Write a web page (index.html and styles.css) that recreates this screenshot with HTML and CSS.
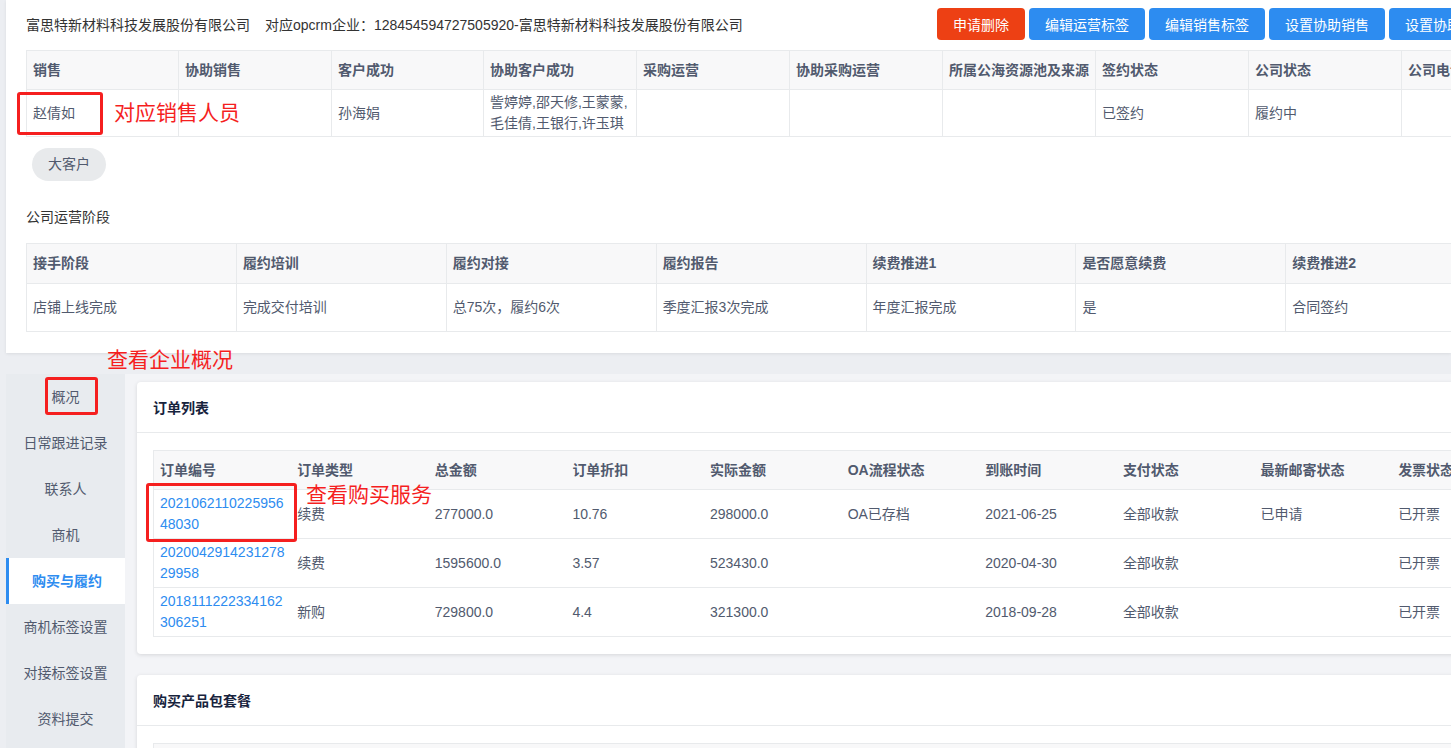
FILE: index.html
```html
<!DOCTYPE html>
<html lang="zh-CN">
<head>
<meta charset="utf-8">
<title>客户详情</title>
<link rel="stylesheet" href="styles.css">
</head>
<body>
<div class="page">
  <section class="top-card">
    <div class="top-head">
      <div class="company">富思特新材料科技发展股份有限公司<span class="ref">对应opcrm企业：128454594727505920-富思特新材料科技发展股份有限公司</span></div>
      <div class="actions">
        <button class="btn btn-red">申请删除</button>
        <button class="btn">编辑运营标签</button>
        <button class="btn">编辑销售标签</button>
        <button class="btn">设置协助销售</button>
        <button class="btn">设置协助客户成功</button>
      </div>
    </div>
    <table class="grid grid-staff">
      <colgroup>
        <col class="c152"><col class="c153"><col class="c152"><col class="c153"><col class="c153"><col class="c153"><col class="c153"><col class="c153"><col class="c153"><col class="c153">
      </colgroup>
      <thead>
        <tr><th>销售</th><th>协助销售</th><th>客户成功</th><th>协助客户成功</th><th>采购运营</th><th>协助采购运营</th><th>所属公海资源池及来源</th><th>签约状态</th><th>公司状态</th><th>公司电话</th></tr>
      </thead>
      <tbody>
        <tr><td>赵倩如</td><td></td><td>孙海娟</td><td>訾婷婷,邵天修,王蒙蒙,毛佳倩,王银行,许玉琪</td><td></td><td></td><td></td><td>已签约</td><td>履约中</td><td></td></tr>
      </tbody>
    </table>
    <div class="tags"><span class="tag">大客户</span></div>
    <div class="section-title">公司运营阶段</div>
    <table class="grid grid-stage">
      <thead>
        <tr><th>接手阶段</th><th>履约培训</th><th>履约对接</th><th>履约报告</th><th>续费推进1</th><th>是否愿意续费</th><th>续费推进2</th><th>续费结果</th></tr>
      </thead>
      <tbody>
        <tr><td>店铺上线完成</td><td>完成交付培训</td><td>总75次，履约6次</td><td>季度汇报3次完成</td><td>年度汇报完成</td><td>是</td><td>合同签约</td><td></td></tr>
      </tbody>
    </table>
  </section>

  <div class="main">
    <nav class="side">
      <div class="side-item">概况</div>
      <div class="side-item">日常跟进记录</div>
      <div class="side-item">联系人</div>
      <div class="side-item">商机</div>
      <div class="side-item active">购买与履约</div>
      <div class="side-item">商机标签设置</div>
      <div class="side-item">对接标签设置</div>
      <div class="side-item">资料提交</div>
    </nav>
    <div class="content">
      <section class="card">
        <div class="card-head">订单列表</div>
        <div class="card-body">
          <table class="orders">
            <thead>
              <tr><th>订单编号</th><th>订单类型</th><th>总金额</th><th>订单折扣</th><th>实际金额</th><th>OA流程状态</th><th>到账时间</th><th>支付状态</th><th>最新邮寄状态</th><th>发票状态</th><th>操作</th></tr>
            </thead>
            <tbody>
              <tr><td><a href="#">202106211022595648030</a></td><td>续费</td><td>277000.0</td><td>10.76</td><td>298000.0</td><td>OA已存档</td><td>2021-06-25</td><td>全部收款</td><td>已申请</td><td>已开票</td><td></td></tr>
              <tr><td><a href="#">202004291423127829958</a></td><td>续费</td><td>1595600.0</td><td>3.57</td><td>523430.0</td><td></td><td>2020-04-30</td><td>全部收款</td><td></td><td>已开票</td><td></td></tr>
              <tr><td><a href="#">2018111222334162306251</a></td><td>新购</td><td>729800.0</td><td>4.4</td><td>321300.0</td><td></td><td>2018-09-28</td><td>全部收款</td><td></td><td>已开票</td><td></td></tr>
            </tbody>
          </table>
        </div>
      </section>
      <section class="card">
        <div class="card-head">购买产品包套餐</div>
        <div class="card-body">
          <table class="orders">
            <thead>
              <tr><th>产品包名称</th><th>套餐类型</th><th>数量</th><th>单价</th><th>金额</th><th>开始时间</th><th>结束时间</th><th>状态</th><th>备注</th><th>操作</th><th></th></tr>
            </thead>
          </table>
        </div>
      </section>
    </div>
  </div>

  <div class="mark mark-sales"></div>
  <div class="note note-sales">对应销售人员</div>
  <div class="mark mark-overview"></div>
  <div class="note note-overview">查看企业概况</div>
  <div class="mark mark-order"></div>
  <div class="note note-order">查看购买服务</div>
</div>
</body>
</html>
```

FILE: styles.css
```css
* { box-sizing: border-box; }

html, body {
  margin: 0;
  padding: 0;
  overflow: hidden;
}

body {
  background: #eceef2;
  font-family: "Liberation Sans", "Noto Sans CJK SC", sans-serif;
  font-size: 14px;
  color: #515a6e;
}

.page {
  position: relative;
  width: 1451px;
  height: 748px;
  overflow: hidden;
}

/* ---------- top card ---------- */
.top-card {
  margin-left: 6px;
  background: #fff;
  padding: 8px 0 21px 20px;
  box-shadow: 0 1px 3px rgba(0, 0, 0, 0.08);
  overflow: hidden;
}

.top-head {
  display: flex;
  align-items: center;
  height: 32px;
}

.company {
  flex: 1;
  min-width: 0;
  white-space: nowrap;
  color: #333;
}

.company .ref { margin-left: 15px; }

.actions {
  flex: 0 0 514px;
  display: flex;
  gap: 4px;
  overflow: hidden;
}

.btn {
  flex-shrink: 0;
  height: 32px;
  padding: 0 16px;
  border: 0;
  border-radius: 4px;
  background: #2d8cf0;
  color: #fff;
  font-family: inherit;
  font-size: 14px;
  white-space: nowrap;
}

.btn-red { background: #ed4014; }

.grid {
  border-collapse: collapse;
  table-layout: fixed;
  margin-top: 10px;
}

.grid th,
.grid td {
  border: 1px solid #e8eaec;
  padding: 0 6px;
  text-align: left;
  line-height: 21px;
  vertical-align: middle;
}

.grid th {
  background: #f8f8f9;
  font-weight: bold;
  white-space: nowrap;
  overflow: hidden;
}

.grid-staff { width: 1528px; }
.grid-staff th { height: 39px; }
.grid-staff td { height: 47px; }
.c152 { width: 152px; }
.c153 { width: 153px; }

.grid-stage { width: 1680px; margin-top: 16px; }
.grid-stage th { height: 40px; }
.grid-stage td { height: 48px; }

.tags { margin: 11px 0 0 6px; }

.tag {
  display: inline-block;
  height: 33px;
  line-height: 33px;
  padding: 0 16px;
  border-radius: 17px;
  background: #e8eaec;
  color: #515a6e;
}

.section-title {
  margin-top: 26px;
  line-height: 20px;
  color: #333;
}

/* ---------- lower area ---------- */
.main {
  display: flex;
  margin-top: 21px;
}

.side {
  flex: 0 0 119px;
  margin-left: 6px;
  background: #e8ebef;
}

.side-item {
  height: 46px;
  line-height: 46px;
  text-align: center;
  color: #515a6e;
  white-space: nowrap;
}

.side-item.active {
  background: #fff;
  color: #2d8cf0;
  border-left: 3px solid #2d8cf0;
  font-weight: bold;
}

.content {
  flex: 1;
  min-width: 0;
  padding: 8px 0 0 12px;
  background: #f3f4f7;
}

.card {
  width: 1560px;
  background: #fff;
  border-radius: 4px;
  box-shadow: 0 1px 4px rgba(0, 0, 0, 0.12);
  margin-bottom: 21px;
}

.card-head {
  height: 51px;
  padding: 0 16px;
  display: flex;
  align-items: center;
  border-bottom: 1px solid #e8eaec;
  font-weight: bold;
  color: #17233d;
}

.card-body { padding: 17px 16px 17px; }

.orders {
  border-collapse: collapse;
  table-layout: fixed;
  width: 1515px;
  border: 1px solid #e8eaec;
}

.orders th,
.orders td {
  padding: 0 6px;
  text-align: left;
  border-bottom: 1px solid #e8eaec;
  line-height: 21px;
  vertical-align: middle;
}

.orders th {
  background: #f8f8f9;
  height: 39px;
  font-weight: bold;
  white-space: nowrap;
}

.orders td {
  height: 49px;
  word-break: break-all;
}

.orders a {
  color: #2d8cf0;
  text-decoration: none;
}

/* ---------- annotations ---------- */
.mark {
  position: absolute;
  border: 3px solid #f51f1f;
  border-radius: 3px;
}

.mark-sales { left: 17px; top: 92px; width: 86px; height: 43px; }
.mark-overview { left: 45px; top: 377px; width: 53px; height: 38px; }
.mark-order { left: 146px; top: 483px; width: 151px; height: 59px; }

.note {
  position: absolute;
  font-family: "Noto Sans CJK SC", sans-serif;
  font-size: 21px;
  line-height: 21px;
  color: #f51f1f;
  white-space: nowrap;
}

.note-sales { left: 114px; top: 101px; }
.note-overview { left: 107px; top: 348px; }
.note-order { left: 306px; top: 483px; }
```
